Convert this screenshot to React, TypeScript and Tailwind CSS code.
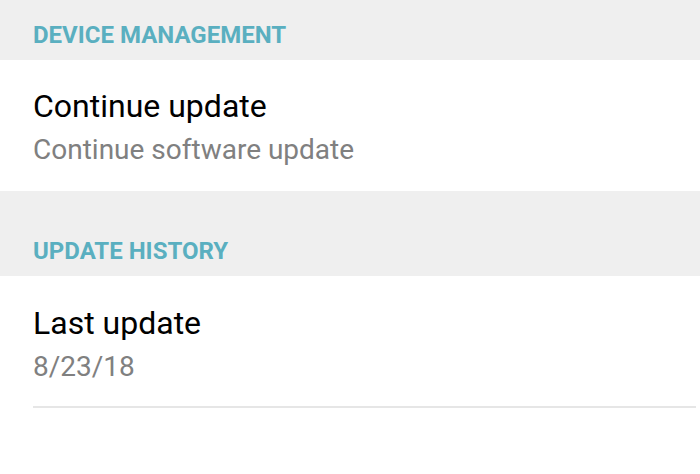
export default function App() {
  return (
    <div className="w-[700px] h-[474px] overflow-hidden bg-white font-['Roboto',sans-serif]">
      <div className="bg-[#efefef] pl-[33px] pt-[23px] pb-[13px]">
        <h2 className="text-[24px] leading-[24px] font-bold text-[#5aafc0]">DEVICE MANAGEMENT</h2>
      </div>
      <div className="pl-[33px] pt-[30px] pb-[27px] flex flex-col gap-[14px]">
        <div className="text-[32px] leading-[32px] text-black">Continue update</div>
        <div className="text-[28px] leading-[28px] text-[#808080]">Continue software update</div>
      </div>
      <div className="bg-[#efefef] pl-[33px] pt-[48px] pb-[13px]">
        <h2 className="text-[24px] leading-[24px] font-bold text-[#5aafc0]">UPDATE HISTORY</h2>
      </div>
      <div className="ml-[33px] mr-[4px] pt-[31px] pb-[25px] flex flex-col gap-[14px] border-b-2 border-[#e6e6e6]">
        <div className="text-[32px] leading-[32px] text-black">Last update</div>
        <div className="text-[28px] leading-[28px] text-[#808080]">8/23/18</div>
      </div>
    </div>
  );
}
